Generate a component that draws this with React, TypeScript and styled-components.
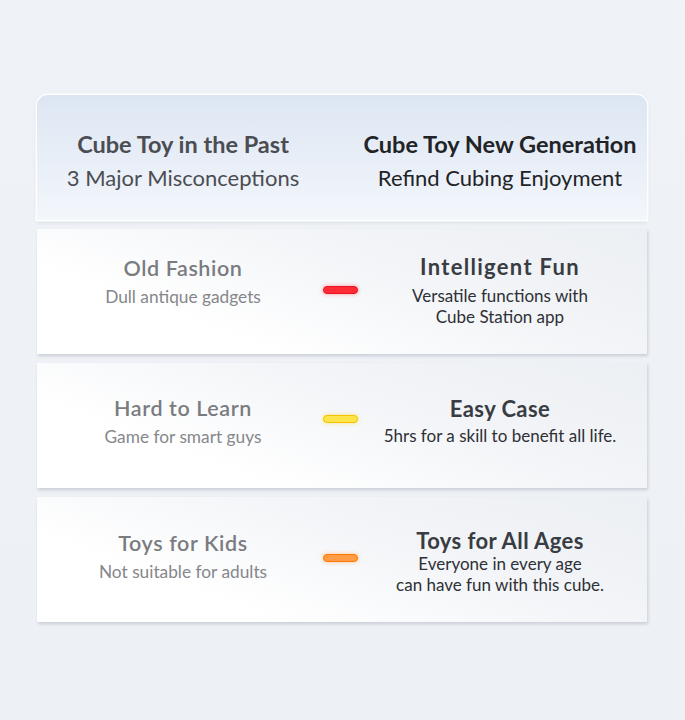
import React from "react";
import styled, { createGlobalStyle } from "styled-components";

const Global = createGlobalStyle`
  html, body { margin: 0; padding: 0; }
  body {
    background: linear-gradient(180deg, #eff2f6 0%, #edf0f4 100%);
    font-family: Lato, "Noto Sans", sans-serif;
    min-height: 720px;
  }
`;

const Page = styled.div`
  width: 685px;
  height: 720px;
  box-sizing: border-box;
  padding: 95px 38px 0 37px;
  display: flex;
  flex-direction: column;
  gap: 9px;
`;

const Grid = styled.div`
  display: grid;
  grid-template-columns: 268px 46px 274px;
  padding: 0 10px 0 12px;
  align-items: center;
  height: 125px;
  box-sizing: border-box;
`;

const HeaderCard = styled(Grid)`
  border-radius: 11px 11px 0 0;
  background: linear-gradient(180deg, #dce6f2 0%, #e8eef7 50%, #f3f7fc 100%);
  box-shadow: 0 0 0 1.5px rgba(255, 255, 255, 0.95), 0 2px 4px rgba(120, 135, 160, 0.22);
`;

const RowCard = styled(Grid)`
  background: linear-gradient(20deg, #ffffff 25%, #f3f5f8 60%, #eceff3 100%);
  box-shadow: 1px 2px 3px rgba(110, 120, 140, 0.28);
`;

const Col = styled.div<{ $shift?: number }>`
  display: flex;
  flex-direction: column;
  align-items: center;
  text-align: center;
  white-space: nowrap;
  transform: translateY(${(p) => p.$shift ?? 0}px);
`;

const HeadTitle = styled.div<{ $dark?: boolean }>`
  font-size: 23.5px;
  font-weight: 700;
  line-height: 28px;
  color: ${(p) => (p.$dark ? "#222326" : "#4b4d52")};
`;

const HeadSub = styled.div<{ $dark?: boolean }>`
  font-size: 22px;
  font-weight: 400;
  line-height: 27px;
  margin-top: 6px;
  color: ${(p) => (p.$dark ? "#222326" : "#4b4d52")};
`;

const OldTitle = styled.div`
  font-size: 21.5px;
  font-weight: 600;
  letter-spacing: 0.6px;
  line-height: 26px;
  color: #7a7c80;
`;

const OldSub = styled.div`
  font-size: 17.3px;
  line-height: 21px;
  margin-top: 5px;
  color: #85878b;
`;

const NewTitle = styled.div<{ $spacing?: number }>`
  font-size: 22px;
  font-weight: 700;
  letter-spacing: ${(p) => p.$spacing ?? 0.4}px;
  line-height: 27px;
  color: #393c42;
`;

const NewSub = styled.div<{ $gap?: number }>`
  font-size: 17px;
  line-height: 20.6px;
  margin-top: ${(p) => p.$gap ?? 9}px;
  color: #2e3035;
`;

const PillCell = styled.div<{ $shift?: number }>`
  display: flex;
  justify-content: center;
  transform: translateY(${(p) => p.$shift ?? 0}px);
`;

const Pill = styled.div<{ $fill: string; $edge: string; $glow: string }>`
  width: 35px;
  height: 8px;
  border-radius: 5px;
  box-sizing: border-box;
  background: ${(p) => p.$fill};
  border: 1.5px solid ${(p) => p.$edge};
  box-shadow: 0 0 4px ${(p) => p.$glow};
`;

type Row = {
  old: string;
  oldSub: string;
  neu: string;
  neuSub: string[];
  pill: { fill: string; edge: string; glow: string };
  oldShift: number;
  pillShift: number;
  newShift: number;
  newGap: number;
  spacing: number;
};

const rows: Row[] = [
  {
    old: "Old Fashion",
    oldSub: "Dull antique gadgets",
    neu: "Intelligent Fun",
    neuSub: ["Versatile functions with", "Cube Station app"],
    pill: { fill: "#ff2b36", edge: "#e8141f", glow: "rgba(255,40,50,0.45)" },
    oldShift: -11,
    pillShift: -2,
    newShift: -1,
    newGap: 6,
    spacing: 1.3,
  },
  {
    old: "Hard to Learn",
    oldSub: "Game for smart guys",
    neu: "Easy Case",
    neuSub: ["5hrs for a skill to benefit all life."],
    pill: { fill: "#ffe54a", edge: "#f2c200", glow: "rgba(255,210,0,0.5)" },
    oldShift: -5,
    pillShift: -7,
    newShift: -5,
    newGap: 4,
    spacing: 0.4,
  },
  {
    old: "Toys for Kids",
    oldSub: "Not suitable for adults",
    neu: "Toys for All Ages",
    neuSub: ["Everyone in every age", "can have fun with this cube."],
    pill: { fill: "#ff9c45", edge: "#ff7a05", glow: "rgba(255,130,20,0.45)" },
    oldShift: -4,
    pillShift: -2,
    newShift: 2,
    newGap: 0,
    spacing: 0.4,
  },
];

export default function App() {
  return (
    <>
      <Global />
      <Page>
        <HeaderCard>
          <Col $shift={3}>
            <HeadTitle>Cube Toy in the Past</HeadTitle>
            <HeadSub>3 Major Misconceptions</HeadSub>
          </Col>
          <div />
          <Col $shift={3}>
            <HeadTitle $dark>Cube Toy New Generation</HeadTitle>
            <HeadSub $dark>Refind Cubing Enjoyment</HeadSub>
          </Col>
        </HeaderCard>
        {rows.map((r) => (
          <RowCard key={r.old}>
            <Col $shift={r.oldShift}>
              <OldTitle>{r.old}</OldTitle>
              <OldSub>{r.oldSub}</OldSub>
            </Col>
            <PillCell $shift={r.pillShift}>
              <Pill $fill={r.pill.fill} $edge={r.pill.edge} $glow={r.pill.glow} />
            </PillCell>
            <Col $shift={r.newShift}>
              <NewTitle $spacing={r.spacing}>{r.neu}</NewTitle>
              <NewSub $gap={r.newGap}>
                {r.neuSub.map((l) => (
                  <div key={l}>{l}</div>
                ))}
              </NewSub>
            </Col>
          </RowCard>
        ))}
      </Page>
    </>
  );
}
